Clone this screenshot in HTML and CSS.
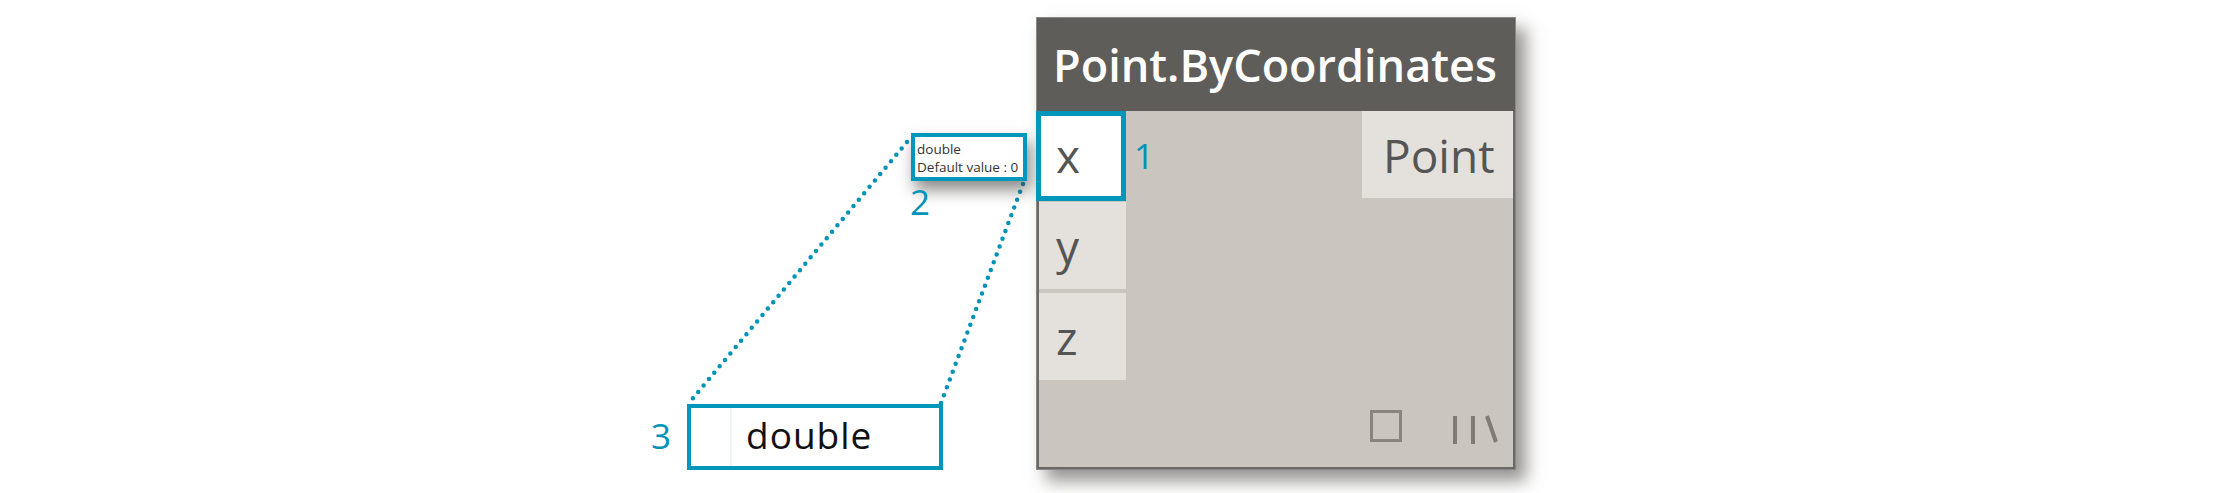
FILE: index.html
```html
<!DOCTYPE html>
<html lang="en">
<head>
  <meta charset="UTF-8">
  <title>Point.ByCoordinates node</title>
  <link rel="stylesheet" href="styles.css">
</head>
<body>
  <div class="stage">
    <!-- dotted lines from the tooltip down to the enlarged crop -->
    <svg class="leaders" width="2218" height="493" viewBox="0 0 2218 493">
      <line x1="907" y1="142" x2="689" y2="403"></line>
      <line x1="1023" y1="184" x2="941" y2="403"></line>
    </svg>

    <div class="crop">
      <div class="crop-gutter"></div>
      <div class="crop-text">double</div>
    </div>

    <div class="node">
      <div class="node-title">Point.ByCoordinates</div>
      <div class="node-body">
        <div class="inputs">
          <div class="port port-active">x</div>
          <div class="port">y</div>
          <div class="port">z</div>
        </div>
        <div class="outputs">
          <div class="port port-out">Point</div>
        </div>
        <div class="node-foot">
          <span class="preview-box"></span>
          <svg class="lacing" width="46" height="30" viewBox="0 0 46 30">
            <path d="M2 1V29M20 1V29M34 1L43 27"></path>
          </svg>
        </div>
      </div>
    </div>

    <div class="tooltip">
      <div>double</div>
      <div>Default value : 0</div>
    </div>
    <span class="callout callout-1">1</span>
    <span class="callout callout-2">2</span>
    <span class="callout callout-3">3</span>
  </div>
</body>
</html>
```

FILE: styles.css
```css
body {
  margin: 0;
  background-color: #fff;
  font-family: "Open Sans", sans-serif;
}
.stage {
  position: relative;
  width: 2218px;
  height: 493px;
  overflow: hidden;
}
.leaders {
  position: absolute;
  left: 0;
  top: 0;
}
.leaders line {
  stroke: #0093b8;
  stroke-width: 4.5;
  stroke-linecap: round;
  stroke-dasharray: 0 8.35;
}

/* node */
.node {
  position: absolute;
  left: 1036px;
  top: 17px;
  width: 480px;
  height: 453px;
  display: flex;
  flex-direction: column;
  box-sizing: border-box;
  background-color: #cac6bf;
  border: 1px solid #8a8884;
  box-shadow: 10px 11px 16px rgba(60, 58, 55, 0.55);
}
.node-title {
  height: 93px;
  padding-left: 16px;
  background-color: #5f5d5a;
  color: #fff;
  font-size: 45px;
  font-weight: 600;
  line-height: 93px;
  white-space: nowrap;
}
.node-body {
  flex: 1;
  display: flex;
  justify-content: space-between;
  position: relative;
  border-left: 2px solid #6b6966;
  border-right: 2px solid #6b6966;
  border-bottom: 2px solid #6b6966;
}
.inputs {
  width: 87px;
  display: flex;
  flex-direction: column;
  gap: 4px;
}
.port {
  height: 87px;
  box-sizing: border-box;
  padding-left: 17px;
  background-color: #e4e1dc;
  color: #555;
  font-size: 46px;
  line-height: 88px;
}
.port-active {
  position: relative;
  z-index: 1;
  height: 90px;
  width: 90px;
  margin-left: -3px;
  margin-bottom: -3px;
  padding-left: 15px;
  background-color: #fff;
  border: 5px solid #0097bb;
  line-height: 78px;
}
.port-out {
  width: 151px;
  padding-left: 21px;
}
.node-foot {
  position: absolute;
  right: 14px;
  bottom: 25px;
  display: flex;
  align-items: flex-end;
  gap: 51px;
}
.preview-box {
  width: 32px;
  height: 32px;
  box-sizing: border-box;
  border: 3px solid #888580;
}
.lacing {
  margin-bottom: -3px;
}
.lacing path {
  fill: none;
  stroke: #7f7c78;
  stroke-width: 4;
}

/* annotations */
.tooltip {
  position: absolute;
  left: 911px;
  top: 133px;
  width: 116px;
  height: 48px;
  box-sizing: border-box;
  padding: 3px 0 0 2px;
  background-color: #fff;
  border: 4px solid #0097bb;
  box-shadow: 4px 9px 16px rgba(60, 58, 55, 0.6);
  color: #333;
  font-size: 13.5px;
  line-height: 18px;
  white-space: nowrap;
}
.callout {
  position: absolute;
  color: #0093b8;
  font-size: 35px;
  line-height: 40px;
}
.callout-1 {
  left: 1134px;
  top: 136px;
}
.callout-2 {
  left: 910px;
  top: 182px;
}
.callout-3 {
  left: 651px;
  top: 416px;
}
.crop {
  position: absolute;
  left: 687px;
  top: 404px;
  width: 256px;
  height: 66px;
  display: flex;
  box-sizing: border-box;
  background-color: #fff;
  border: 4px solid #0097bb;
}
.crop-gutter {
  width: 39px;
  border-right: 2px solid #eef5f8;
}
.crop-text {
  padding-left: 14px;
  color: #111;
  font-size: 37px;
  line-height: 54px;
  letter-spacing: 1px;
}
```
